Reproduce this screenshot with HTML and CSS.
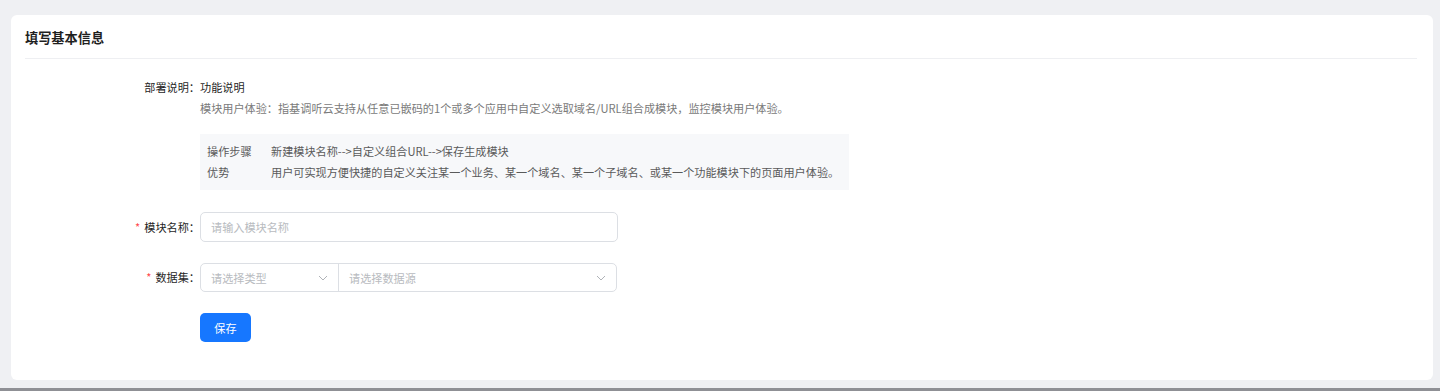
FILE: index.html
```html
<!DOCTYPE html>
<html lang="zh-CN">
<head>
<meta charset="utf-8">
<link rel="stylesheet" href="styles.css">
</head>
<body>
<div class="page">
  <div class="card">
    <div class="card-head">填写基本信息</div>
    <div class="form">
      <div class="row">
        <div class="label">部署说明：</div>
        <div class="content">
          <div class="line dark">功能说明</div>
          <div class="line muted">模块用户体验：指基调听云支持从任意已嵌码的1个或多个应用中自定义选取域名/URL组合成模块，监控模块用户体验。</div>
          <div class="tips">
            <div class="tip"><span class="tip-k">操作步骤</span><span>新建模块名称--&gt;自定义组合URL--&gt;保存生成模块</span></div>
            <div class="tip"><span class="tip-k">优势</span><span>用户可实现方便快捷的自定义关注某一个业务、某一个域名、某一个子域名、或某一个功能模块下的页面用户体验。</span></div>
          </div>
        </div>
      </div>
      <div class="row field first">
        <div class="label"><span class="req">*</span>模块名称：</div>
        <div class="content">
          <div class="input">请输入模块名称</div>
        </div>
      </div>
      <div class="row field">
        <div class="label"><span class="req">*</span>数据集：</div>
        <div class="content">
          <div class="selects">
            <div class="select s1"><span>请选择类型</span><svg width="10" height="6" viewBox="0 0 10 6"><path d="M1 1l4 4 4-4" fill="none" stroke="#b0b3b8" stroke-width="1"/></svg></div>
            <div class="select s2"><span>请选择数据源</span><svg width="10" height="6" viewBox="0 0 10 6"><path d="M1 1l4 4 4-4" fill="none" stroke="#b0b3b8" stroke-width="1"/></svg></div>
          </div>
        </div>
      </div>
      <div class="row field">
        <div class="label"></div>
        <div class="content">
          <button class="btn">保存</button>
        </div>
      </div>
    </div>
  </div>
  <div class="hbar"></div>
</div>
</body>
</html>
```
FILE: styles.css
```css
* { box-sizing: border-box; }
html, body { margin: 0; padding: 0; }
body {
  font-family: "Noto Sans CJK SC", "Noto Sans", sans-serif;
  font-size: 11.15px;
  color: #333;
  background: #eff0f3;
  width: 1440px;
  height: 391px;
  overflow: hidden;
}
.page {
  padding: 15px 7px 0 11px;
  height: 391px;
  display: flex;
  flex-direction: column;
}
.card {
  background: #fff;
  border-radius: 6px;
  height: 365px;
  padding: 0 16px 0 14px;
}
.card-head {
  height: 44px;
  line-height: 46px;
  font-size: 13.2px;
  font-weight: 700;
  color: #1f1f1f;
  border-bottom: 1px solid #eeeff2;
}
.form { padding-top: 18px; }
.row { display: flex; align-items: flex-start; }
.label {
  width: 175px;
  flex: none;
  text-align: right;
  line-height: 21px;
  color: #1f1f1f;
}
.content { flex: none; }
.line { line-height: 21px; }
.dark { color: #1f1f1f; }
.muted { color: #7a7a7a; }
.tips {
  margin-top: 15px;
  background: #f7f8fa;
  padding: 7px 10px 7px 7px;
  width: fit-content;
  color: #5a5a5a;
}
.tip { line-height: 21px; display: flex; }
.tip-k { width: 64px; flex: none; }
.field { align-items: center; }
.field.first { margin-top: 22px; }
.field + .field { margin-top: 21px; }
.req { color: #ff4d4f; margin-right: 4px; }
.input {
  width: 418px;
  height: 30px;
  border: 1px solid #dcdfe4;
  border-radius: 5px;
  padding-left: 10px;
  line-height: 28px;
  color: #b8bbc0;
}
.selects {
  display: flex;
  width: 417px;
  height: 29px;
  border: 1px solid #dcdfe4;
  border-radius: 5px;
}
.select {
  display: flex;
  align-items: center;
  justify-content: space-between;
  padding: 0 10px 0 10px;
  color: #b8bbc0;
}
.s1 { width: 138px; border-right: 1px solid #dcdfe4; }
.s2 { flex: 1; }
.btn {
  width: 51px;
  height: 29px;
  border: none;
  border-radius: 5px;
  background: #1677ff;
  color: #fff;
  font-family: inherit;
  font-size: 11.15px;
  padding: 0;
}
.hbar {
  margin-top: auto;
  height: 3px;
  margin-left: -11px;
  margin-right: -7px;
  background: #8f9095;
}
```
